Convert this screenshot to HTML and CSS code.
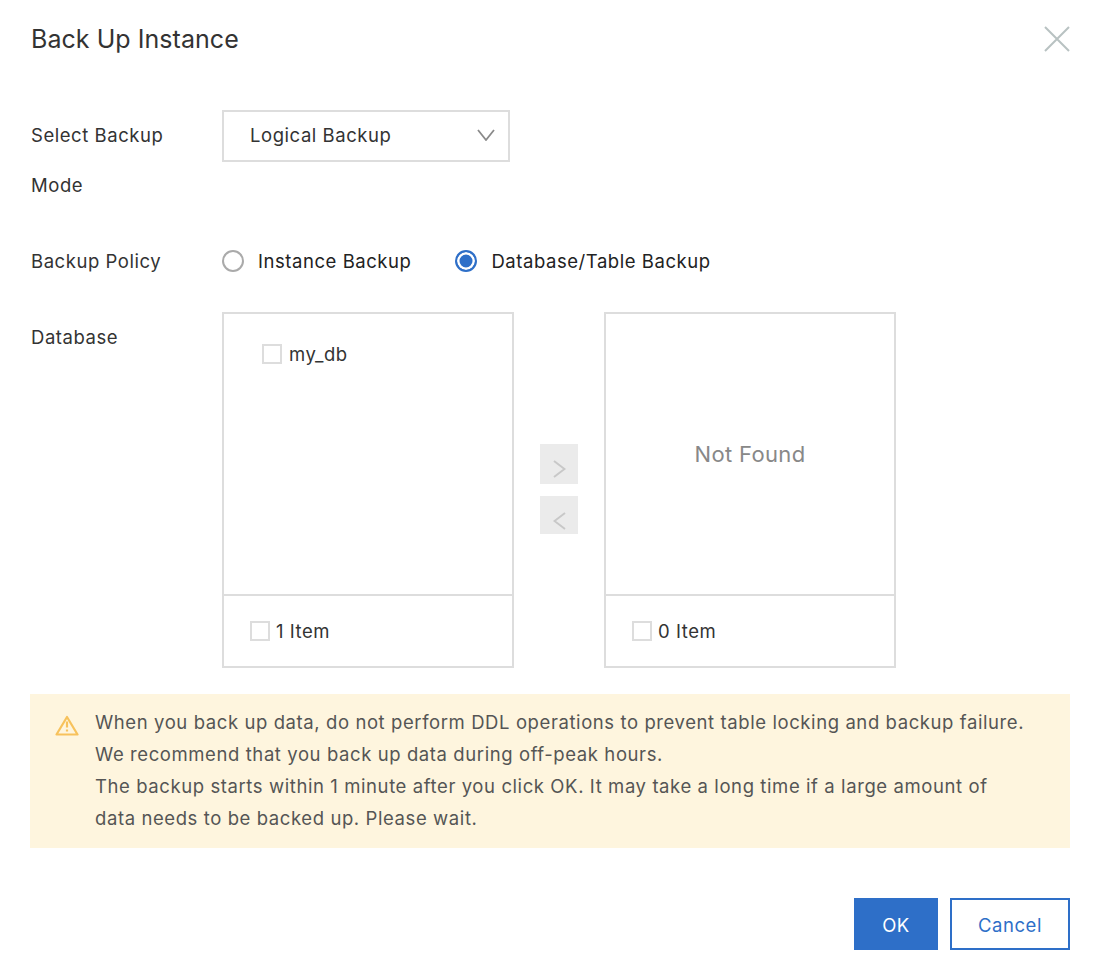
FILE: index.html
```html
<!doctype html>
<html lang="en">

<head>
    <title>Back Up Instance</title>
    <link rel="stylesheet" href="styles.css">
</head>

<body>

    <div class="dialog">
        <div class="dialog-header">
            <h2 class="dialog-title">Back Up Instance</h2>
            <svg class="close-icon" width="26" height="26" viewBox="0 0 26 26">
                <path d="M1 1L25 25M25 1L1 25" fill="none" stroke="#b8c2c2" stroke-width="2" />
            </svg>
        </div>

        <div class="form-row form-row-mode">
            <div class="form-label">Select Backup Mode</div>
            <div class="select">
                <span>Logical Backup</span>
                <svg width="18" height="12" viewBox="0 0 18 12">
                    <path d="M1 1L9 11L17 1" fill="none" stroke="#8a8a8a" stroke-width="1.8" />
                </svg>
            </div>
        </div>

        <div class="form-row">
            <div class="form-label">Backup Policy</div>
            <div class="radio-group">
                <div class="radio-item">
                    <span class="radio"></span>
                    <span>Instance Backup</span>
                </div>
                <div class="radio-item">
                    <span class="radio radio-checked"></span>
                    <span>Database/Table Backup</span>
                </div>
            </div>
        </div>

        <div class="form-row">
            <div class="form-label">Database</div>
            <div class="transfer">
                <div class="transfer-panel">
                    <div class="transfer-body">
                        <div class="transfer-item">
                            <span class="checkbox"></span>
                            <span>my_db</span>
                        </div>
                    </div>
                    <div class="transfer-footer">
                        <span class="checkbox"></span>
                        <span>1 Item</span>
                    </div>
                </div>

                <div class="transfer-ops">
                    <div class="op-button op-right">
                        <svg width="13" height="18" viewBox="0 0 13 18">
                            <path d="M1 1L11.5 9L1 17" fill="none" stroke="#c8c8c8" stroke-width="2" />
                        </svg>
                    </div>
                    <div class="op-button op-left">
                        <svg width="13" height="18" viewBox="0 0 13 18">
                            <path d="M12 1L1.5 9L12 17" fill="none" stroke="#c8c8c8" stroke-width="2" />
                        </svg>
                    </div>
                </div>

                <div class="transfer-panel">
                    <div class="transfer-body transfer-empty">Not Found</div>
                    <div class="transfer-footer">
                        <span class="checkbox"></span>
                        <span>0 Item</span>
                    </div>
                </div>
            </div>
        </div>

        <div class="alert">
            <svg class="alert-icon" width="24" height="22" viewBox="0 0 24 22">
                <path d="M12 2L22.5 19.5H1.5Z" fill="none" stroke="#f7c25c" stroke-width="2.2" stroke-linejoin="round" />
                <path d="M12 6.5V12.5M12 14.5V16.5" fill="none" stroke="#f7c25c" stroke-width="2.2" />
            </svg>
            <div class="alert-text">
                When you back up data, do not perform DDL operations to prevent table locking and backup failure.<br>
                We recommend that you back up data during off-peak hours.<br>
                The backup starts within 1 minute after you click OK. It may take a long time if a large amount of<br>
                data needs to be backed up. Please wait.
            </div>
        </div>

        <div class="dialog-footer">
            <button class="btn btn-primary">OK</button>
            <button class="btn btn-default">Cancel</button>
        </div>
    </div>

</body>

</html>
```

FILE: styles.css
```css
body {
    font-family: Inter, "Liberation Sans", sans-serif;
    font-size: 18.5px;
    letter-spacing: 0.55px;
    color: #333;
    margin: 0;
    padding: 0;
    background-color: white;
}

.dialog {
    padding: 0 24px 16px 30px;
}

.dialog-header {
    display: flex;
    justify-content: space-between;
    align-items: center;
    height: 78px;
    margin-bottom: 32px;
}

.dialog-title {
    margin: 0;
    padding-left: 1px;
    font-size: 25px;
    font-weight: 400;
    letter-spacing: 0.05px;
}

.form-row {
    display: flex;
    margin-bottom: 26px;
}

.form-row-mode {
    height: 100px;
}

.form-label {
    width: 149px;
    margin-right: 42px;
    padding-left: 1px;
    line-height: 50px;
}

.select {
    display: flex;
    justify-content: space-between;
    align-items: center;
    box-sizing: border-box;
    width: 288px;
    height: 52px;
    padding: 0 13px 2px 26px;
    border: 2px solid #ddd;
}

.radio-group {
    display: flex;
    align-items: center;
    height: 50px;
    gap: 44px;
    color: #222;
}

.radio-item {
    display: flex;
    align-items: center;
    gap: 14px;
}

.radio {
    box-sizing: border-box;
    width: 22px;
    height: 22px;
    border: 2px solid #aaa;
    border-radius: 50%;
}

.radio-checked {
    border-color: #2e6fc8;
    background-color: #2e6fc8;
    box-shadow: inset 0 0 0 2.5px white;
}

.transfer {
    display: flex;
}

.transfer-panel {
    box-sizing: border-box;
    width: 292px;
    height: 356px;
    border: 2px solid #ddd;
}

.transfer-body {
    box-sizing: border-box;
    height: 282px;
    border-bottom: 2px solid #ddd;
}

.transfer-item {
    display: flex;
    align-items: center;
    gap: 7px;
    padding: 29px 0 0 38px;
}

.transfer-empty {
    display: flex;
    justify-content: center;
    align-items: center;
    font-size: 22px;
    letter-spacing: 0.33px;
    color: #888;
}

.transfer-footer {
    display: flex;
    align-items: center;
    gap: 6px;
    height: 70px;
    padding-left: 26px;
}

.checkbox {
    box-sizing: border-box;
    width: 20px;
    height: 20px;
    border: 2px solid #ddd;
}

.transfer-ops {
    display: flex;
    flex-direction: column;
    justify-content: center;
    align-items: center;
    gap: 12px;
    width: 90px;
    height: 354px;
}

.op-button {
    display: flex;
    justify-content: center;
    align-items: center;
    box-sizing: border-box;
    width: 38px;
    height: 38px;
    background-color: #ebebeb;
}

.op-right {
    height: 40px;
    padding-top: 9px;
}

.op-left {
    padding-top: 12px;
}

.alert {
    display: flex;
    align-items: flex-start;
    padding: 12px 24px 14px 25px;
    background-color: #fef5de;
}

.alert-icon {
    flex-shrink: 0;
    margin: 9px 16px 0 0;
}

.alert-text {
    line-height: 32px;
    letter-spacing: 0.59px;
    color: #555;
}

.dialog-footer {
    display: flex;
    justify-content: flex-end;
    gap: 12px;
    margin-top: 50px;
}

.btn {
    height: 52px;
    padding: 2px 0 0;
    font-family: inherit;
    font-size: 18.5px;
    letter-spacing: 0.55px;
    border-radius: 0;
    cursor: pointer;
}

.btn-primary {
    width: 84px;
    color: white;
    background-color: #2e6fc8;
    border: none;
}

.btn-default {
    width: 120px;
    color: #2e6fc8;
    background-color: white;
    border: 2px solid #2e6fc8;
}
```
